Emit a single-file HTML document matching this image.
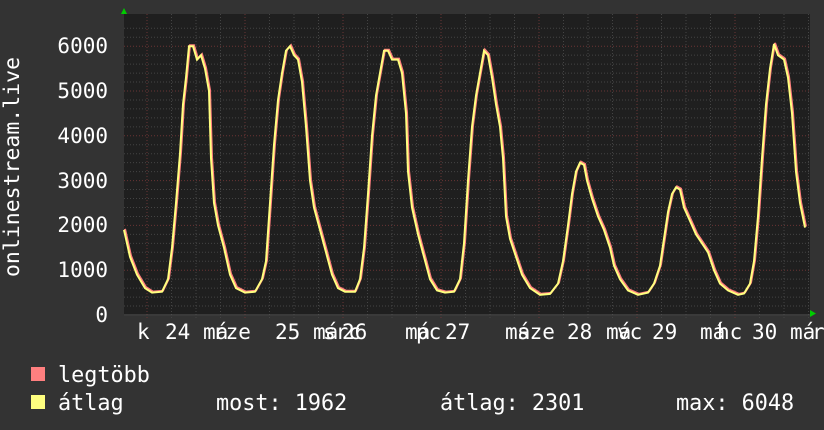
<!DOCTYPE html><html><head><meta charset="utf-8"><style>
body{margin:0;background:#333;width:824px;height:430px;overflow:hidden;font-family:"DejaVu Sans Mono","Liberation Mono",monospace;color:#fff}
svg{position:absolute;left:0;top:0}
</style></head><body>
<svg width="824" height="430" xmlns="http://www.w3.org/2000/svg" font-family="DejaVu Sans Mono, Liberation Mono, monospace" font-size="21" fill="#fff">
<rect x="0" y="0" width="824" height="430" fill="#333"/>
<rect x="124" y="14" width="686" height="302" fill="#1f1f1f"/>
<g id="grid"></g>
<polygon points="121,14 127,14 124,8" fill="#0c0"/>
<polygon points="810,310 810,317 816,313.5" fill="#0c0"/>
<g text-anchor="end">
<text x="108" y="53">6000</text><text x="108" y="98">5000</text><text x="108" y="143">4000</text>
<text x="108" y="188">3000</text><text x="108" y="232">2000</text><text x="108" y="277">1000</text><text x="108" y="322">0</text>
</g>
<text transform="translate(19,167) rotate(-90)" text-anchor="middle" font-size="21.5">onlinestream.live</text>
<g font-size="21">
<text x="137" y="339">k</text><text x="165" y="339">24</text><text x="203" y="339">má</text><text x="213" y="339">rze</text>
<text x="275" y="339">25</text><text x="313" y="339">má</text><text x="323" y="339">src</text><text x="342" y="339">26</text>
<text x="405" y="339">má</text><text x="416" y="339">pc</text><text x="445" y="339">27</text><text x="505" y="339">má</text><text x="517" y="339">sze</text>
<text x="567" y="339">28</text><text x="606" y="339">má</text><text x="617" y="339">vc</text><text x="652" y="339">29</text>
<text x="700" y="339">má</text><text x="717" y="339">hc</text><text x="752" y="339">30</text><text x="790" y="339">má</text><text x="812" y="339">r</text>
</g>
<rect x="31" y="367" width="14" height="14" fill="#ff7f7f"/>
<rect x="31" y="395" width="14" height="14" fill="#ffff7f"/>
<g font-size="21.8">
<text x="58" y="382">legtöbb</text>
<text x="58" y="410">átlag</text>
<text x="216" y="410">most: 1962</text>
<text x="440" y="410">átlag: 2301</text>
<text x="676" y="410">max: 6048</text>
</g>
<g id="lines"></g>
</svg>
<script>
var g=document.getElementById('grid'),s='';
for(var v=0;v<=6500;v+=200){var y=315-v*0.0448;if(y<14)break;var maj=v%1000==0;
s+='<line x1="124" x2="810" y1="'+y+'" y2="'+y+'" stroke="'+(maj?'#6a3434':'#444')+'" stroke-dasharray="1,2"/>';}
for(var x=147-98;x<810;x+=24.5){if(x<124)continue;var maj=Math.abs(((x-147)/98)-Math.round((x-147)/98))<0.01;
s+='<line y1="14" y2="318" x1="'+x+'" x2="'+x+'" stroke="'+(maj?'#6a3434':'#444')+'" stroke-dasharray="1,2"/>';}
s+='<line x1="124" x2="810" y1="315" y2="315" stroke="#555"/>';
g.innerHTML=s;
var p=[124,1900,130,1300,137,900,145,600,152,500,162,520,168,800,172,1500,176,2500,180,3600,183,4700,186,5300,189,6000,193,6000,197,5700,201,5800,205,5500,209,5000,211,3500,214,2500,218,2000,224,1500,230,900,236,600,245,500,255,520,262,800,266,1200,270,2500,274,3800,278,4800,282,5400,286,5900,290,6000,294,5800,298,5700,302,5200,306,4200,310,3000,314,2400,320,1900,326,1400,332,900,338,600,345,520,355,520,360,800,364,1500,368,2700,372,4000,376,4900,380,5400,384,5900,388,5900,392,5700,398,5700,402,5400,406,4500,408,3200,412,2400,418,1800,424,1300,430,800,437,550,445,500,454,520,460,800,464,1600,468,3000,472,4200,476,4900,480,5400,484,5900,488,5800,492,5300,496,4700,500,4200,503,3500,506,2200,510,1700,516,1300,522,900,530,600,540,450,550,470,558,700,563,1200,568,2000,572,2700,576,3200,580,3400,584,3350,587,3000,592,2600,598,2200,604,1900,610,1500,614,1100,620,800,628,550,638,450,648,500,654,700,660,1100,664,1700,668,2300,672,2700,676,2850,680,2800,684,2400,690,2100,696,1800,702,1600,708,1400,714,1000,720,700,728,550,738,450,744,480,750,700,754,1200,758,2200,762,3500,766,4700,770,5500,774,6050,778,5800,784,5700,788,5300,792,4500,796,3200,800,2500,805,1950];
var pts='';for(var i=0;i<p.length;i+=2)pts+=p[i]+','+(315-p[i+1]*0.0448).toFixed(1)+' ';
document.getElementById('lines').innerHTML='<polyline points="'+pts+'" fill="none" stroke="#ff7f7f" stroke-width="2" transform="translate(1,-1)"/><polyline points="'+pts+'" fill="none" stroke="#ffff7f" stroke-width="2"/>';
</script>
</body></html>
